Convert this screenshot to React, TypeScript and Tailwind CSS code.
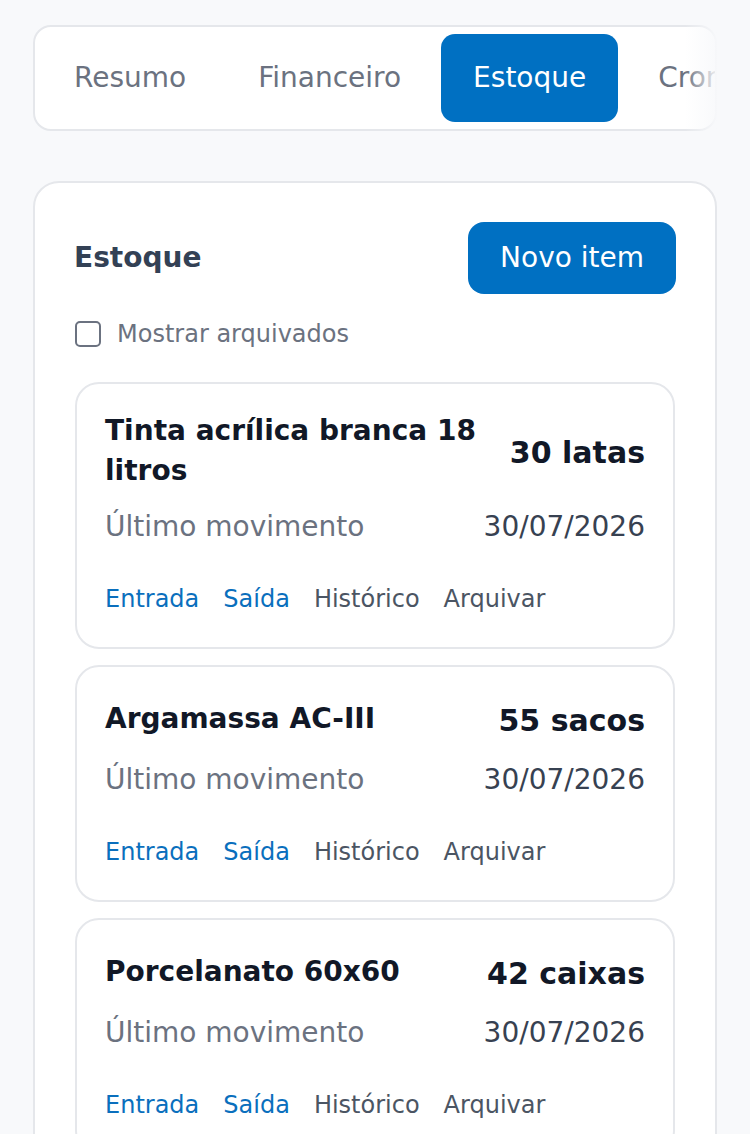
import React from "react";

const items = [
  { name: "Tinta acrílica branca 18 litros", qty: "30 latas", date: "30/07/2026" },
  { name: "Argamassa AC-III", qty: "55 sacos", date: "30/07/2026" },
  { name: "Porcelanato 60x60", qty: "42 caixas", date: "30/07/2026" },
];

const tabs = ["Resumo", "Financeiro", "Estoque", "Cronograma", "Documentos"];

export default function App() {
  return (
    <div
      className="min-h-[1134px] bg-[#f8f9fb] px-[33px] pt-[25px] pb-10"
      style={{ fontFamily: '"DejaVu Sans", Verdana, sans-serif' }}
    >
      <div className="relative">
        <div className="flex gap-2 overflow-hidden rounded-[18px] border-2 border-[#e5e7eb] bg-white p-[7px]">
          {tabs.map((t) => (
            <div
              key={t}
              className={
                t === "Estoque"
                  ? "shrink-0 rounded-[14px] bg-[#0070c2] px-8 py-6 text-[28px] leading-[40px] text-white"
                  : "shrink-0 rounded-[14px] px-8 py-6 text-[28px] leading-[40px] text-[#6b7280]"
              }
            >
              {t}
            </div>
          ))}
        </div>
        <div className="pointer-events-none absolute -right-[2px] top-0 bottom-0 w-[34px] bg-gradient-to-r from-[#f8f9fb00] to-[#f8f9fb]" />
      </div>

      <div className="mt-[50px] rounded-[26px] border-2 border-[#e5e7eb] bg-white px-10 pt-[39px] pb-10">
        <div className="flex items-center justify-between">
          <div className="-ml-px text-[28px] font-bold leading-[40px] text-[#334155]">Estoque</div>
          <div className="-mr-px rounded-[16px] bg-[#0070c2] px-8 py-4 text-[28px] leading-[40px] text-white">
            Novo item
          </div>
        </div>

        <div className="mt-6 flex items-center gap-4">
          <div className="h-[26px] w-[26px] rounded-[5px] border-2 border-[#6b7280] bg-white" />
          <span className="text-[24px] leading-[32px] text-[#6b7280]">Mostrar arquivados</span>
        </div>

        <div className="mt-8 flex flex-col gap-4">
          {items.map((it) => (
            <div
              key={it.name}
              className="rounded-[24px] border-2 border-[#e5e7eb] bg-white px-7 pt-[27px] pb-[24px]"
            >
              <div className="flex items-center justify-between gap-4">
                <div className="min-w-0 flex-1 text-[28px] font-bold leading-[40px] text-[#111827]">
                  {it.name}
                </div>
                <div className="shrink-0 pt-1 text-[30px] font-bold leading-[46px] text-[#111827]">
                  {it.qty}
                </div>
              </div>
              <div className="mt-4 flex items-center justify-between text-[28px] leading-[40px]">
                <span className="text-[#6b7280]">Último movimento</span>
                <span className="text-[#374151]">{it.date}</span>
              </div>
              <div className="mt-7 flex items-center gap-6 text-[24px] leading-[32px]">
                <span className="py-2 text-[#0a6fbd]">Entrada</span>
                <span className="py-2 text-[#0a6fbd]">Saída</span>
                <span className="py-2 text-[#4b5563]">Histórico</span>
                <span className="py-2 text-[#4b5563]">Arquivar</span>
              </div>
            </div>
          ))}
        </div>
      </div>
    </div>
  );
}
